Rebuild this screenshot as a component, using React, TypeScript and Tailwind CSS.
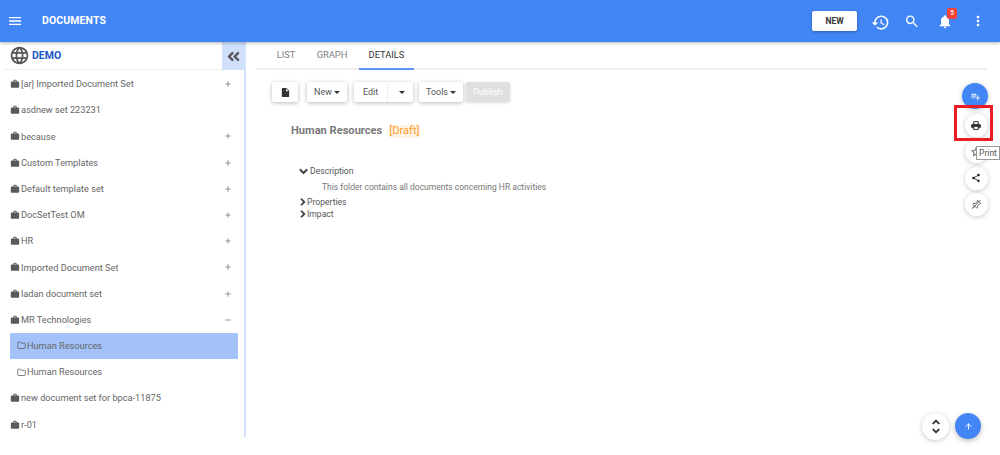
import React from "react";
import { Folder, Plus, Minus, ArrowUp } from "lucide-react";
import { MdMenu, MdHistory, MdSearch, MdNotifications, MdMoreVert, MdLanguage, MdWork, MdInsertDriveFile, MdShare, MdStarBorder, MdPlaylistAdd } from "react-icons/md";
import { FaAngleDoubleLeft, FaChevronDown, FaChevronRight, FaChevronUp } from "react-icons/fa";

const rows: { t: string; m?: "+" | "-"; sub?: boolean; sel?: boolean }[] = [
  { t: "[ar] Imported Document Set", m: "+" },
  { t: "asdnew set 223231" },
  { t: "because", m: "+" },
  { t: "Custom Templates", m: "+" },
  { t: "Default template set", m: "+" },
  { t: "DocSetTest OM", m: "+" },
  { t: "HR", m: "+" },
  { t: "Imported Document Set", m: "+" },
  { t: "ladan document set", m: "+" },
  { t: "MR Technologies", m: "-" },
  { t: "Human Resources", sub: true, sel: true },
  { t: "Human Resources", sub: true },
  { t: "new document set for bpca-11875" },
  { t: "r-01" },
];

function Btn({ children, className = "" }: { children: React.ReactNode; className?: string }) {
  return (
    <div className={"h-[20px] pt-px bg-white rounded-[2px] shadow-[0_1px_4px_rgba(0,0,0,0.28)] flex items-center text-[9px] text-[#555] " + className}>
      {children}
    </div>
  );
}

function Caret() {
  return <span className="inline-block ml-[2px] w-0 h-0 border-x-[3px] border-x-transparent border-t-[3px] border-t-[#333]" />;
}

function Fab({ children, className = "" }: { children: React.ReactNode; className?: string }) {
  return (
    <div className={"rounded-full flex items-center justify-center shadow-[0_1px_5px_rgba(0,0,0,0.22)] " + className}>
      {children}
    </div>
  );
}

function PrintIcon() {
  return (
    <svg width="10" height="9" viewBox="0 0 10 9" fill="none" stroke="#333" strokeWidth="1">
      <path d="M2.8 3.6V.6h4.4v3" />
      <rect x=".6" y="3.4" width="8.8" height="3.4" rx=".8" fill="#333" />
      <rect x="2.8" y="5.4" width="4.4" height="3" fill="#fff" />
    </svg>
  );
}

function PinOffIcon() {
  return (
    <svg width="11" height="11" viewBox="0 0 11 11" fill="none" stroke="#555" strokeWidth="0.9">
      <path d="M6.5 1.2l3.2 3.2-1.2.5-1.9 2 .1 1.6-1 .6L2 5.4l.6-1 1.6.1 2-1.9z" />
      <path d="M3.6 7.3L1.2 9.7M9.4 1.2L1.6 9" />
    </svg>
  );
}

export default function App() {
  return (
    <div className="relative w-[1000px] h-[455px] overflow-hidden bg-white font-['Roboto',sans-serif]">
      <header className="h-[42px] bg-[#4285f4] shadow-[0_1px_3px_rgba(0,0,0,0.3)] flex items-center relative z-10">
        <MdMenu size={16} color="#fff" className="ml-[7px]" />
        <span className="ml-[19px] text-white text-[10.5px] font-bold tracking-[0.1px]">DOCUMENTS</span>
        <div className="ml-auto flex items-center">
          <div className="w-[45px] h-[20px] bg-white rounded-[2px] shadow-[0_1px_3px_rgba(0,0,0,0.3)] flex items-center justify-center text-[8.5px] font-bold text-[#333]">NEW</div>
          <div className="w-[20px] ml-[13px] flex justify-center pt-[2px]"><MdHistory size={19} color="#fff" /></div>
          <div className="w-[16px] ml-[14px] flex justify-center"><MdSearch size={17} color="#fff" /></div>
          <div className="relative w-[16px] ml-[17px] flex justify-center pt-[1px]">
            <MdNotifications size={17} color="#fff" />
            <span className="absolute -top-[4px] left-[10px] w-[10px] h-[11px] bg-[#f44336] rounded-[2px] text-white text-[6.5px] font-medium flex items-center justify-center">5</span>
          </div>
          <div className="w-[16px] ml-[17px] mr-[14px] flex justify-center"><MdMoreVert size={16} color="#fff" /></div>
        </div>
      </header>

      <div className="flex h-[413px]">
        <aside className="w-[246px] h-[395px] border-r-2 border-[#d3e2fb] shrink-0 flex flex-col">
          <div className="h-[28px] flex items-center">
            <div className="ml-[4px] flex-1 h-[28px] border-b border-[#eee] flex items-center pl-[6px]">
              <MdLanguage size={21} color="#555" className="-ml-[1px]" />
              <span className="ml-[2px] text-[#1c56c9] text-[10.5px] font-bold">DEMO</span>
            </div>
            <div className="w-[22px] h-[28px] bg-[#d0e0fb] flex items-center justify-center">
              <FaAngleDoubleLeft size={15} color="#555" />
            </div>
          </div>
          <div className="flex flex-col pt-[1px]">
            {rows.map((r, i) => (
              <div key={i} className={"h-[26.2px] ml-[10px] mr-[6px] flex items-center text-[9.2px] text-[#666] " + (r.sel ? "bg-[#a3c2f9]" : "") + (r.sub ? " pl-[7px]" : "")}>
                {r.sub ? <Folder size={9} color="#555" className="mr-px shrink-0" /> : <MdWork size={10} color="#5a5a5a" className="shrink-0 mr-px" />}
                <span className="truncate">{r.t}</span>
                {r.m === "+" && <Plus size={8} color="#666" className="ml-auto mr-[6px]" />}
                {r.m === "-" && <Minus size={8} color="#666" className="ml-auto mr-[6px]" />}
              </div>
            ))}
          </div>
        </aside>

        <main className="flex-1 min-w-0">
          <nav className="h-[28px] ml-[10px] mr-[13px] border-b-2 border-[#eee] flex text-[9.3px] text-[#808080]">
            <div className="w-[53px] flex items-center justify-center pl-[7px]">LIST</div>
            <div className="w-[50px] flex items-center justify-center pr-[4px]">GRAPH</div>
            <div className="w-[55px] h-[28px] border-b-2 border-[#5b94f5] flex items-center justify-center text-[#333]">DETAILS</div>
          </nav>

          <div className="flex items-center mt-[12px] ml-[26px]">
            <Btn className="w-[26px] justify-center">
              <MdInsertDriveFile size={11} color="#333" />
            </Btn>
            <Btn className="w-[40px] justify-center ml-[9px]">New<Caret /></Btn>
            <Btn className="w-[59px] ml-[7px]">
              <div className="w-[34px] h-full flex items-center justify-center border-r border-[#eee]">Edit</div>
              <div className="flex-1 flex items-center justify-center"><Caret /></div>
            </Btn>
            <Btn className="w-[44px] justify-center ml-[6px]">Tools<Caret /></Btn>
            <div className="w-[44px] h-[20px] pt-px ml-[3px] bg-[#e0e0e0] rounded-[2px] shadow-[0_1px_3px_rgba(0,0,0,0.15)] flex items-center justify-center text-[9px] text-white">Publish</div>
          </div>

          <div className="mt-[22px] ml-[45px] flex items-center h-[14px]">
            <span className="text-[11.1px] font-bold text-[#7a7a7a]">Human Resources</span>
            <span className="ml-[7px] h-[13px] flex items-center text-[11.1px] text-[#ff9d2e] bg-[#fff3e5]">[Draft]</span>
          </div>

          <div className="mt-[27px] ml-[53px] text-[#555]">
            <div className="h-[12px] flex items-center text-[8.6px]">
              <FaChevronDown size={9} color="#333" stroke="#333" strokeWidth={40} className="mr-[2px]" />Description
            </div>
            <div className="mt-[4px] h-[12px] ml-[23px] flex items-center text-[8.5px] text-[#777]">This folder contains all documents concerning HR activities</div>
            <div className="mt-[3px] h-[12px] flex items-center text-[8.6px]">
              <FaChevronRight size={8} color="#333" stroke="#333" strokeWidth={40} />Properties
            </div>
            <div className="h-[12px] flex items-center text-[8.6px]">
              <FaChevronRight size={8} color="#333" stroke="#333" strokeWidth={40} />Impact
            </div>
          </div>
        </main>
      </div>

      {/* floating action column */}
      <div className="absolute left-[962px] top-[83px] w-[28px] flex flex-col items-center">
        <Fab className="w-[26px] h-[26px] bg-[#4285f4] -ml-[2px] mb-[5px]"><MdPlaylistAdd size={11} color="#fff" /></Fab>
        <Fab className="w-[23px] h-[23px] bg-white mb-[3.3px]"><PrintIcon /></Fab>
        <Fab className="w-[23px] h-[23px] bg-white mb-[3.3px]"><MdStarBorder size={12} color="#555" /></Fab>
        <Fab className="w-[23px] h-[23px] bg-white mb-[3.3px]"><MdShare size={10} color="#222" /></Fab>
        <Fab className="w-[23px] h-[23px] bg-white"><PinOffIcon /></Fab>
      </div>
      <div className="absolute left-[954px] top-[105px] w-[39px] h-[36px] border-[3px] border-[#ec1c24]" />
      <div className="absolute left-[976px] top-[146px] w-[24px] h-[14px] bg-white border border-[#999] flex items-center justify-center text-[8.5px] text-[#555]">Print</div>

      <div className="absolute left-[922px] top-[413px] w-[27px] h-[27px] rounded-full bg-white shadow-[0_1px_5px_rgba(0,0,0,0.22)] flex flex-col items-center justify-center gap-[1px]">
        <FaChevronUp size={8} color="#222" stroke="#222" strokeWidth={40} />
        <FaChevronDown size={8} color="#222" stroke="#222" strokeWidth={40} />
      </div>
      <div className="absolute left-[955px] top-[413px] w-[26px] h-[26px] rounded-full bg-[#4285f4] shadow-[0_2px_5px_rgba(0,0,0,0.25)] flex items-center justify-center">
        <ArrowUp size={9} color="#fff" strokeWidth={2.5} />
      </div>
    </div>
  );
}
